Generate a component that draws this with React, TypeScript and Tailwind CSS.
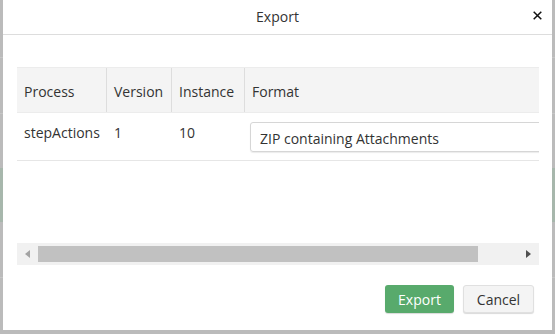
import React from "react";

export default function App() {
  const font = { fontFamily: '"Open Sans", "Noto Sans", sans-serif' };
  return (
    <div
      className="relative w-[555px] h-[334px] overflow-hidden bg-[#bbbbbb]"
      style={font}
    >
      {/* background behind overlay */}
      <div className="absolute left-0 right-0 top-[57px] h-px bg-[#c6c6c6]" />
      <div className="absolute left-0 right-0 top-[113px] h-px bg-[#c6c6c6]" />
      <div className="absolute left-0 right-0 top-[168px] h-[54px] bg-[#a7b7ac]" />
      <div className="absolute left-0 right-0 top-[277px] h-px bg-[#c6c6c6]" />

      <div className="relative ml-[3px] w-[549px] h-[330px] bg-white flex flex-col">
        {/* header */}
        <div className="relative h-[35px] border-b border-[#dddddd] flex items-center justify-center">
          <span className="text-[14px] text-[#333333] leading-none">Export</span>
          <svg
            className="absolute left-[530px] top-[11px]"
            width="9"
            height="9"
            viewBox="0 0 9 9"
          >
            <path d="M0.7 0.7 L8.3 8.3 M8.3 0.7 L0.7 8.3" stroke="#111" strokeWidth="1.5" />
          </svg>
        </div>

        {/* body */}
        <div className="pl-[14px] pr-[13px] pt-[32px]">
          <div className="w-[522px] overflow-hidden">
            <div className="w-[700px] text-[14px] text-[#333333]">
              {/* header row */}
              <div className="flex h-[46px] bg-[#f4f4f4] border-t border-[#ececec] border-b border-[#dddddd]">
                <div className="w-[90px] pl-[7px] pt-[2px] flex items-center border-r border-[#dddddd]">Process</div>
                <div className="w-[65px] pl-[7px] pt-[2px] flex items-center border-r border-[#dddddd]">Version</div>
                <div className="w-[73px] pl-[7px] pt-[2px] flex items-center border-r border-[#dddddd]">Instance</div>
                <div className="flex-1 pl-[7px] pt-[2px] flex items-center">Format</div>
              </div>
              {/* data row */}
              <div className="flex h-[48px] border-b border-[#e6e6e6]">
                <div className="w-[90px] pl-[7px] pt-[10px] leading-[20px]">stepActions</div>
                <div className="w-[65px] pl-[7px] pt-[10px] leading-[20px]">1</div>
                <div className="w-[73px] pl-[7px] pt-[10px] leading-[20px]">10</div>
                <div className="flex-1 pl-[5px] pt-[9px]">
                  <div className="h-[30px] w-[400px] rounded-[3px] border border-[#d6d6d6] shadow-[0_1px_1px_rgba(0,0,0,0.08)] flex items-center pl-[9px] pt-[2px] text-[14px] text-[#333333]">
                    ZIP containing Attachments
                  </div>
                </div>
              </div>
            </div>
          </div>

          {/* spacer */}
          <div className="h-[82px]" />

          {/* horizontal scrollbar */}
          <div className="w-[522px] h-[22px] bg-[#f1f1f1] flex items-center">
            <div className="w-[21px] h-full flex items-center justify-center">
              <svg width="5" height="8" viewBox="0 0 5 8">
                <path d="M5 0 L0 4 L5 8 Z" fill="#a3a3a3" />
              </svg>
            </div>
            <div className="w-[440px] h-[16px] bg-[#c1c1c1]" />
            <div className="flex-1" />
            <div className="w-[21px] h-full flex items-center justify-center">
              <svg width="5" height="8" viewBox="0 0 5 8">
                <path d="M0 0 L5 4 L0 8 Z" fill="#505050" />
              </svg>
            </div>
          </div>
        </div>

        {/* footer */}
        <div className="flex justify-end gap-[9px] pr-[18px] pt-[20px]">
          <button className="h-[28px] w-[69px] rounded-[3px] bg-[#58aa6c] text-white text-[14px] leading-none pt-[1px] shadow-[0_1px_1px_rgba(0,0,0,0.15)]">
            Export
          </button>
          <button className="h-[28px] w-[71px] rounded-[3px] bg-[#f4f4f4] border border-[#e0e0e0] text-[#333333] text-[14px] leading-none pt-[1px] shadow-[0_1px_1px_rgba(0,0,0,0.15)]">
            Cancel
          </button>
        </div>
      </div>
    </div>
  );
}
